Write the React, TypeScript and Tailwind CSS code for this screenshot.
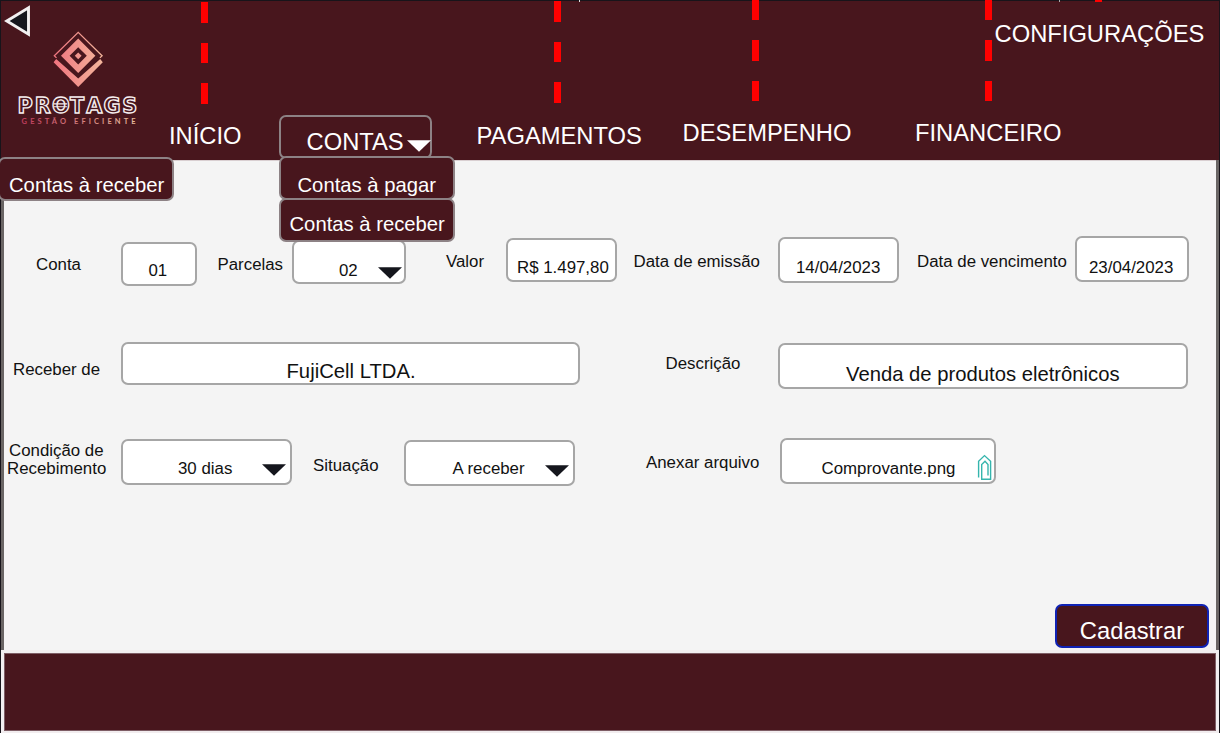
import type { ReactNode } from "react";

function Label({ className, children }: { className: string; children: ReactNode }) {
  return (
    <div className={`shrink-0 whitespace-nowrap text-[16.85px] leading-[18px] text-[#111] ${className}`}>
      {children}
    </div>
  );
}

function Field({ className, children }: { className: string; children: ReactNode }) {
  return (
    <div
      className={`relative shrink-0 whitespace-nowrap rounded-[7px] border-2 border-[#a6a6a6] bg-white text-[#111] ${className}`}
    >
      {children}
    </div>
  );
}

function Caret({ className }: { className: string }) {
  return (
    <svg className={`absolute h-[12px] w-[24px] ${className}`} viewBox="0 0 24 12">
      <path d="M0 0.3H24L12 11.7Z" fill="currentColor" />
    </svg>
  );
}

function Dashes({ className }: { className: string }) {
  return (
    <div className={`absolute flex w-[7px] flex-col gap-[20px] ${className}`}>
      <i className="h-[20.6px] bg-[#ff0000]" />
      <i className="h-[20.6px] bg-[#ff0000]" />
      <i className="h-[20.6px] bg-[#ff0000]" />
    </div>
  );
}

function Logo() {
  return (
    <svg className="h-[100px] w-[130px]" viewBox="14 28 130 100">
      <defs>
        <linearGradient id="mark" x1="54" y1="60" x2="103" y2="60" gradientUnits="userSpaceOnUse">
          <stop offset="0" stopColor="#f0747f" />
          <stop offset="1" stopColor="#f3b79c" />
        </linearGradient>
        <linearGradient id="tag" x1="0" y1="0" x2="1" y2="0">
          <stop offset="0" stopColor="#bd3a5c" />
          <stop offset="1" stopColor="#e6bd9d" />
        </linearGradient>
      </defs>
      <path d="M56.5 57.9L54.3 55.7L78.2 32.4L102.1 55.7L99.9 57.9" fill="none" stroke="url(#mark)" strokeWidth="1.3" />
      <path
        d="M78.2 38.6L95.4 55.8L78.2 73L61 55.8ZM78.2 47.2L69.6 55.8L78.2 64.4L86.8 55.8Z"
        fill="url(#mark)"
        fillRule="evenodd"
      />
      <path d="M78.2 52.4L81.6 55.8L78.2 59.2L74.8 55.8Z" fill="url(#mark)" />
      <path d="M56.2 59L78.2 78.6L100.2 59L102.8 62.2L78.2 87L53.6 62.2Z" fill="url(#mark)" />
      <text
        x="17.5 34.7 51.9 70 86.3 103.5 122.2"
        y="112.7"
        fontFamily="DejaVu Sans"
        fontWeight="700"
        fontSize="20.8"
        fill="#48161d"
        stroke="#f7f0f0"
        strokeWidth="1.35"
      >
        PROTAGS
      </text>
      <path d="M53.5 103.9H67.2M53.5 106.8H67.2" stroke="#f7f0f0" strokeWidth="1.1" />
      <text
        x="21.6"
        y="123.8"
        textLength="114"
        lengthAdjust="spacing"
        fontFamily="Lato"
        fontWeight="700"
        fontSize="7.5"
        fill="url(#tag)"
      >
        GESTÃO EFICIENTE
      </text>
    </svg>
  );
}

function Header() {
  return (
    <header className="relative h-[160px] border-x border-t border-[#17141a] bg-[#48161d] text-[23.75px] leading-[26px] text-white">
      <div className="ml-[13px] h-[121px] pt-[27px]">
        <Logo />
      </div>
      <svg className="absolute top-[3px] left-[3px] h-[34px] w-[28px]" viewBox="4 4 28 34">
        <path d="M6.8 21L28.5 7.8V34.2Z" fill="#15161d" stroke="#f2f0f1" strokeWidth="2.9" />
      </svg>
      <Dashes className="top-[1px] left-[200px]" />
      <Dashes className="top-0 left-[553px]" />
      <Dashes className="-top-[1.5px] left-[750.5px]" />
      <Dashes className="-top-[1.5px] left-[984px]" />
      <i className="absolute -top-px left-[1094px] h-[2px] w-[7px] bg-[#ff0000]" />
      <i className="absolute -top-px left-[578px] h-[2px] w-px bg-[#ddd]" />
      <i className="absolute -top-px left-[1058px] h-[2px] w-px bg-[#aaa]" />
      <div className="absolute top-[20px] left-[993.5px]">CONFIGURAÇÕES</div>
      <nav className="flex whitespace-nowrap">
        <a className="mt-px w-[278px] pl-[168px]">INÍCIO</a>
        <div className="relative -mt-[7px] h-[44px] w-[153px] rounded-[7px] border-2 border-[#8d8285] pt-[12px] pl-[25.5px]">
          CONTAS
          <Caret className="top-[23px] left-[126px] text-white" />
          <div className="absolute top-[38.5px] -left-[2px] z-10 w-[176px] text-[20.25px] leading-[22px]">
            <div className="h-[44px] rounded-[7px] border-2 border-[#8d8285] bg-[#48161d] pt-[16px] pl-[16.5px]">
              Contas à pagar
            </div>
            <div className="-mt-[2px] h-[44px] rounded-[7px] border-2 border-[#8d8285] bg-[#48161d] pt-[13px] pl-[8.5px]">
              Contas à receber
            </div>
          </div>
        </div>
        <a className="mt-px w-[206px] pl-[44.5px]">PAGAMENTOS</a>
        <a className="-mt-[2px] w-[232.5px] pl-[44.5px]">DESEMPENHO</a>
        <a className="-mt-[2px] pl-[44.5px]">FINANCEIRO</a>
      </nav>
      <div className="absolute top-[156px] -left-[3px] h-[44px] w-[176px] whitespace-nowrap rounded-[7px] border-2 border-[#8d8285] bg-[#48161d] pt-[15px] pl-[9px] text-[20.25px] leading-[22px]">
        Contas à receber
      </div>
    </header>
  );
}

export default function App() {
  return (
    <div
      className="flex h-[733px] w-[1220px] flex-col overflow-hidden bg-[#17141a]"
      style={{ fontFamily: '"Liberation Sans", Arial, sans-serif' }}
    >
      <Header />
      <main className="mx-px h-[490px] border-x-3 border-[#696564] bg-[#f4f4f4]">
        <div className="flex h-[106px] items-start border-t border-[#d9cfd1] pt-[75px] text-[16.85px] leading-[18px]">
          <Label className="mt-[19.5px] w-[117px] pl-[32px]">Conta</Label>
          <Field className="mt-[6px] h-[44px] w-[76px] pt-[18px] pl-[25.5px]">01</Field>
          <Label className="mt-[19.5px] w-[95px] pl-[20.5px]">Parcelas</Label>
          <Field className="mt-[4px] h-[44px] w-[114px] pt-[20px] pl-[45px]">
            02
            <Caret className="top-[25px] left-[84px] text-[#15161d]" />
          </Field>
          <Label className="mt-[16.5px] w-[100px] pl-[40px]">Valor</Label>
          <Field className="mt-[2px] h-[44px] w-[111px] pt-[19px] pl-[9px]">R$ 1.497,80</Field>
          <Label className="mt-[16.5px] w-[161px] pl-[16.5px]">Data de emissão</Label>
          <Field className="mt-px h-[46px] w-[121px] pt-[20px] pl-[16px]">14/04/2023</Field>
          <Label className="mt-[16.5px] w-[176px] pl-[18px]">Data de vencimento</Label>
          <Field className="h-[46px] w-[114px] pt-[21px] pl-[12px]">23/04/2023</Field>
        </div>

        <div className="flex h-[97px] items-start pt-[76px] text-[20.25px] leading-[22px]">
          <Label className="mt-[19px] w-[117px] pl-[9px]">Receber de</Label>
          <Field className="h-[43px] w-[459px] pt-[16px] pl-[163.5px]">FujiCell LTDA.</Field>
          <Label className="mt-[12.5px] w-[198px] pl-[85.5px]">Descrição</Label>
          <Field className="mt-px h-[46px] w-[410px] pt-[18px] pl-[66px]">Venda de produtos eletrônicos</Field>
        </div>

        <div className="mt-[75px] flex items-start text-[16.85px] leading-[18px]">
          <Label className="mt-[3.5px] w-[117px] pl-[3px]">
            <span className="ml-[2px]">Condição de</span>
            <br />
            Recebimento
          </Label>
          <Field className="mt-px h-[46px] w-[171px] pt-[19px] pl-[55px]">
            30 dias
            <Caret className="top-[22.5px] left-[139px] text-[#15161d]" />
          </Field>
          <Label className="mt-[18.5px] w-[112px] pl-[21px]">Situação</Label>
          <Field className="mt-[2px] h-[46px] w-[171px] pt-[18px] pl-[46.5px]">
            A receber
            <Caret className="top-[23px] left-[139px] text-[#15161d]" />
          </Field>
          <Label className="mt-[15.5px] w-[205px] pl-[71px]">Anexar arquivo</Label>
          <Field className="h-[46px] w-[216px] pt-[20px] pl-[39.5px]">
            Comprovante.png
            <svg
              className="absolute top-[13px] left-[194px] h-[29px] w-[17px]"
              viewBox="976 453 17 29"
              fill="none"
              stroke="#35b5ad"
              strokeWidth="1.4"
            >
              <path d="M978.6 477.5V461.2L984.5 455.6L990.6 461.2V479.2H981.7V464.5L985 461.2L988 464.5V475.5" />
            </svg>
          </Field>
        </div>

        <div className="mt-[118px] mr-[7px] flex justify-end">
          <button className="h-[44px] w-[154px] rounded-[7px] border-2 border-[#1023b5] bg-[#48161d] pt-[9px] text-[23.75px] leading-[26px] text-white">
            Cadastrar
          </button>
        </div>
      </main>
      <footer className="mx-px h-[83px] bg-[#f2edef] px-[3px] pt-[3px] pb-[2px]">
        <div className="h-full border border-[#7e5d65] bg-[#48161d]" />
      </footer>
    </div>
  );
}
